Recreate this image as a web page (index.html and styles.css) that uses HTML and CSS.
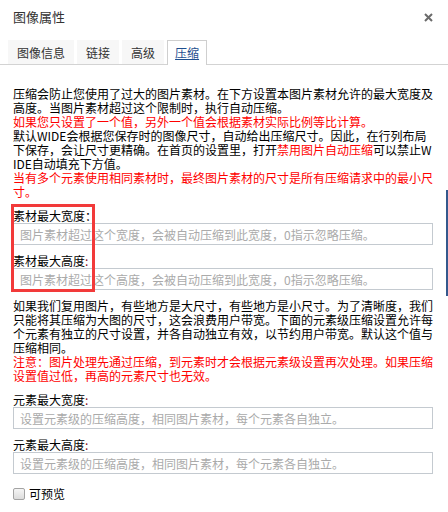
FILE: index.html
```html
<!DOCTYPE html>
<html lang="zh-CN">
<head>
    <meta charset="UTF-8">
    <meta name="viewport" content="width=device-width, initial-scale=1.0">
    <title>图像属性</title>
    <link rel="stylesheet" href="styles.css">
</head>
<body>
<div class="dialog">
    <div class="header">
        <span class="title">图像属性</span>
        <svg class="close" width="9" height="9" viewBox="0 0 9 9">
            <path d="M1 1 L8 8 M8 1 L1 8" stroke="#6b6b6b" stroke-width="2"/>
        </svg>
    </div>

    <div class="tabs">
        <span class="tab">图像信息</span>
        <span class="tab">链接</span>
        <span class="tab">高级</span>
        <span class="tab active">压缩</span>
    </div>

    <div class="content">
        <div class="intro">
            <p>压缩会防止您使用了过大的图片素材。在下方设置本图片素材允许的最大宽度及高度。当图片素材超过这个限制时，执行自动压缩。</p>
            <p class="warn">如果您只设置了一个值，另外一个值会根据素材实际比例等比计算。</p>
            <p>默认WIDE会根据您保存时的图像尺寸，自动给出压缩尺寸。因此，在行列布局下保存，会让尺寸更精确。在首页的设置里，打开<span class="warn">禁用图片自动压缩</span>可以禁止WIDE自动填充下方值。</p>
            <p class="warn">当有多个元素使用相同素材时，最终图片素材的尺寸是所有压缩请求中的最小尺寸。</p>
        </div>

        <div class="size-group">
            <div class="field">
                <label for="maxWidth">素材最大宽度：</label>
                <input type="text" id="maxWidth" placeholder="图片素材超过这个宽度，会被自动压缩到此宽度，0指示忽略压缩。">
            </div>
            <div class="field">
                <label for="maxHeight">素材最大高度<span class="colon">:</span></label>
                <input type="text" id="maxHeight" placeholder="图片素材超过这个高度，会被自动压缩到此宽度，0指示忽略压缩。">
            </div>
            <div class="highlight"></div>
        </div>

        <div class="intro second">
            <p>如果我们复用图片，有些地方是大尺寸，有些地方是小尺寸。为了清晰度，我们只能将其压缩为大图的尺寸，这会浪费用户带宽。下面的元素级压缩设置允许每个元素有独立的尺寸设置，并各自动独立有效，以节约用户带宽。默认这个值与压缩相同。</p>
            <p class="warn">注意：图片处理先通过压缩，到元素时才会根据元素级设置再次处理。如果压缩设置值过低，再高的元素尺寸也无效。</p>
        </div>

        <div class="field">
            <label for="elWidth">元素最大宽度<span class="colon">:</span></label>
            <input type="text" id="elWidth" placeholder="设置元素级的压缩高度，相同图片素材，每个元素各自独立。">
        </div>
        <div class="field">
            <label for="elHeight">元素最大高度<span class="colon">:</span></label>
            <input type="text" id="elHeight" placeholder="设置元素级的压缩高度，相同图片素材，每个元素各自独立。">
        </div>

        <label class="check">
            <input type="checkbox">
            <span>可预览</span>
        </label>
    </div>

    <div class="edge"></div>
</div>
</body>
</html>
```

FILE: styles.css
```css
body {
    margin: 0;
    background: #fff;
    font-family: "Noto Sans CJK SC", "Liberation Sans", sans-serif;
    font-size: 12px;
    color: #000;
}

.dialog {
    position: relative;
    width: 448px;
    height: 512px;
    overflow: hidden;
}

.header {
    display: flex;
    justify-content: space-between;
    align-items: center;
    height: 32px;
    padding: 1px 15px 0 13px;
    margin-bottom: 7px;
}

.title {
    font-size: 13px;
    line-height: 16px;
    color: #333;
}

.close {
    display: block;
}

.tabs {
    display: flex;
    gap: 3px;
    padding-left: 8px;
    border-bottom: 1px solid #d3d3d3;
}

.tab {
    height: 24px;
    line-height: 24px;
    padding: 0 8px;
    background: #f7f7f7;
    color: #333;
    box-sizing: border-box;
    border: 1px solid transparent;
    border-bottom: none;
}

.tab.active {
    background: #fff;
    border-color: #cfcfcf;
    color: #1f4f8f;
    text-decoration: underline;
    height: 25px;
    margin-bottom: -1px;
    padding: 0 7px;
    width: 40px;
}

.content {
    padding: 22px 14px 0 13px;
}

.intro p {
    margin: 0;
    line-height: 14px;
    word-break: break-all;
}

.warn {
    color: #f00;
}

.second {
    margin-top: 9px;
}

.size-group {
    position: relative;
    margin-top: 10px;
}

.highlight {
    position: absolute;
    left: -2px;
    top: -5px;
    width: 84px;
    height: 88px;
    box-sizing: border-box;
    border: 3px solid #f23a3a;
}

.field {
    margin-top: 10px;
}

.size-group .field:first-child {
    margin-top: 0;
}

.field + .field {
    margin-top: 9px;
}

.field label {
    display: block;
    line-height: 14px;
}

.colon {
    color: #8a1020;
}

.field input {
    display: block;
    width: 420px;
    height: 22px;
    margin: 0;
    padding: 0 6px;
    box-sizing: border-box;
    border: 1px solid #c4cad0;
    font-family: inherit;
    font-size: 12px;
    outline: none;
}

.field input::placeholder {
    color: #aaa;
}

.check {
    display: flex;
    align-items: center;
    gap: 4px;
    margin-top: 13px;
    line-height: 14px;
}

.check input {
    appearance: none;
    width: 12px;
    height: 12px;
    margin: 0;
    border: 1px solid #a3a3a3;
    border-radius: 2px;
    background: linear-gradient(#f5f5f5, #dcdcdc);
}

.edge {
    position: absolute;
    right: 0;
    top: 190px;
    width: 2px;
    height: 106px;
    background: #34588c;
}
```
